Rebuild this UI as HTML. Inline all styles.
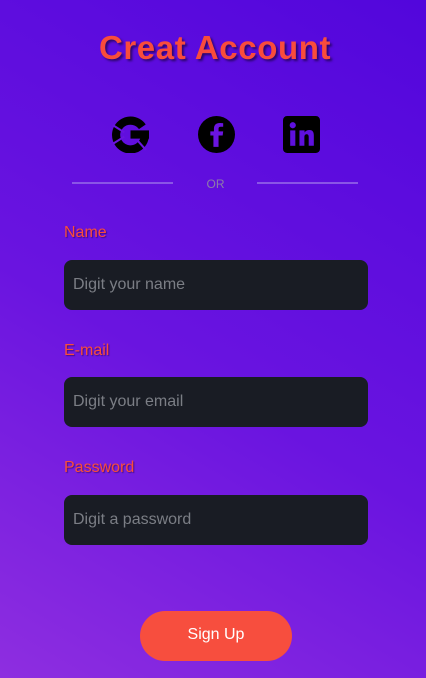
<!DOCTYPE html>
<html><head><style>
*{margin:0;padding:0;box-sizing:border-box}
body{width:426px;height:678px;overflow:hidden;font-family:"Liberation Sans",sans-serif;background:linear-gradient(30deg,#8e2ee0 0%,#6a14e0 45%,#5206dc 100%);position:relative}
h1{position:absolute;top:29px;left:0;width:430px;text-align:center;color:#f94c3c;font-size:33px;font-weight:bold;letter-spacing:0.6px;text-shadow:2px 2px 2px rgba(0,0,0,.5)}
.ic{position:absolute;top:116px;width:37px;height:37px}
.line{position:absolute;top:182px;height:2px;width:101px;background:#8a55e6}
.or{position:absolute;top:177px;left:0;width:431px;text-align:center;font-size:12px;color:#8d7ca8}
.lab{position:absolute;left:64px;color:#f94c3c;font-size:16px;text-shadow:1px 1px 1px rgba(0,0,0,.4)}
.inp{position:absolute;left:64px;width:304px;height:50px;border-radius:8px;background:#191c24;color:#7b7e85;font-size:16px;padding-left:9px;line-height:50px}
.btn{position:absolute;left:140px;top:611px;width:152px;height:50px;border-radius:25px;background:#f74e3e;color:#fff;font-size:16px;text-align:center;line-height:48px}
</style></head><body>
<h1>Creat Account</h1>
<svg class="ic" style="left:112px" viewBox="0 0 36 36"><path d="M29.5 10.5 A14 14 0 1 0 32 18" fill="none" stroke="#000" stroke-width="8"/><rect x="18" y="14" width="18" height="8" fill="#000"/><path d="M1 9 L12 16 M1 27 L12 20 M25 24 L33 33" stroke="#6a14e0" stroke-width="2"/></svg>
<svg class="ic" style="left:198px" viewBox="0 0 36 36"><circle cx="18" cy="18" r="18" fill="#000"/><path d="M20 30V19h4l.5-4H20v-2.5c0-1.2.4-2 2-2h2.5V7c-.5 0-2-.2-3.5-.2-3.4 0-5.5 2-5.5 5.7V15h-3.5v4H15v11z" fill="#6a14e0"/></svg>
<svg class="ic" style="left:283px" viewBox="0 0 36 36"><rect width="36" height="36" rx="4" fill="#000"/><rect x="7" y="14" width="5" height="15" fill="#5e10de"/><circle cx="9.5" cy="9" r="3" fill="#5e10de"/><path d="M16 14h5v2c1-1.6 2.6-2.4 4.6-2.4 3.5 0 4.4 2.3 4.4 5.4V29h-5v-8.5c0-1.6-.4-2.8-2-2.8s-2.2 1.2-2.2 2.8V29H16z" fill="#5e10de"/></svg>
<div class="line" style="left:72px"></div><div class="line" style="left:257px"></div>
<div class="or">OR</div>
<div class="lab" style="top:224px">Name</div>
<div class="inp" style="top:260px">Digit your name</div>
<div class="lab" style="top:342px">E-mail</div>
<div class="inp" style="top:377px">Digit your email</div>
<div class="lab" style="top:459px">Password</div>
<div class="inp" style="top:495px">Digit a password</div>
<div class="btn">Sign Up</div>
</body></html>
